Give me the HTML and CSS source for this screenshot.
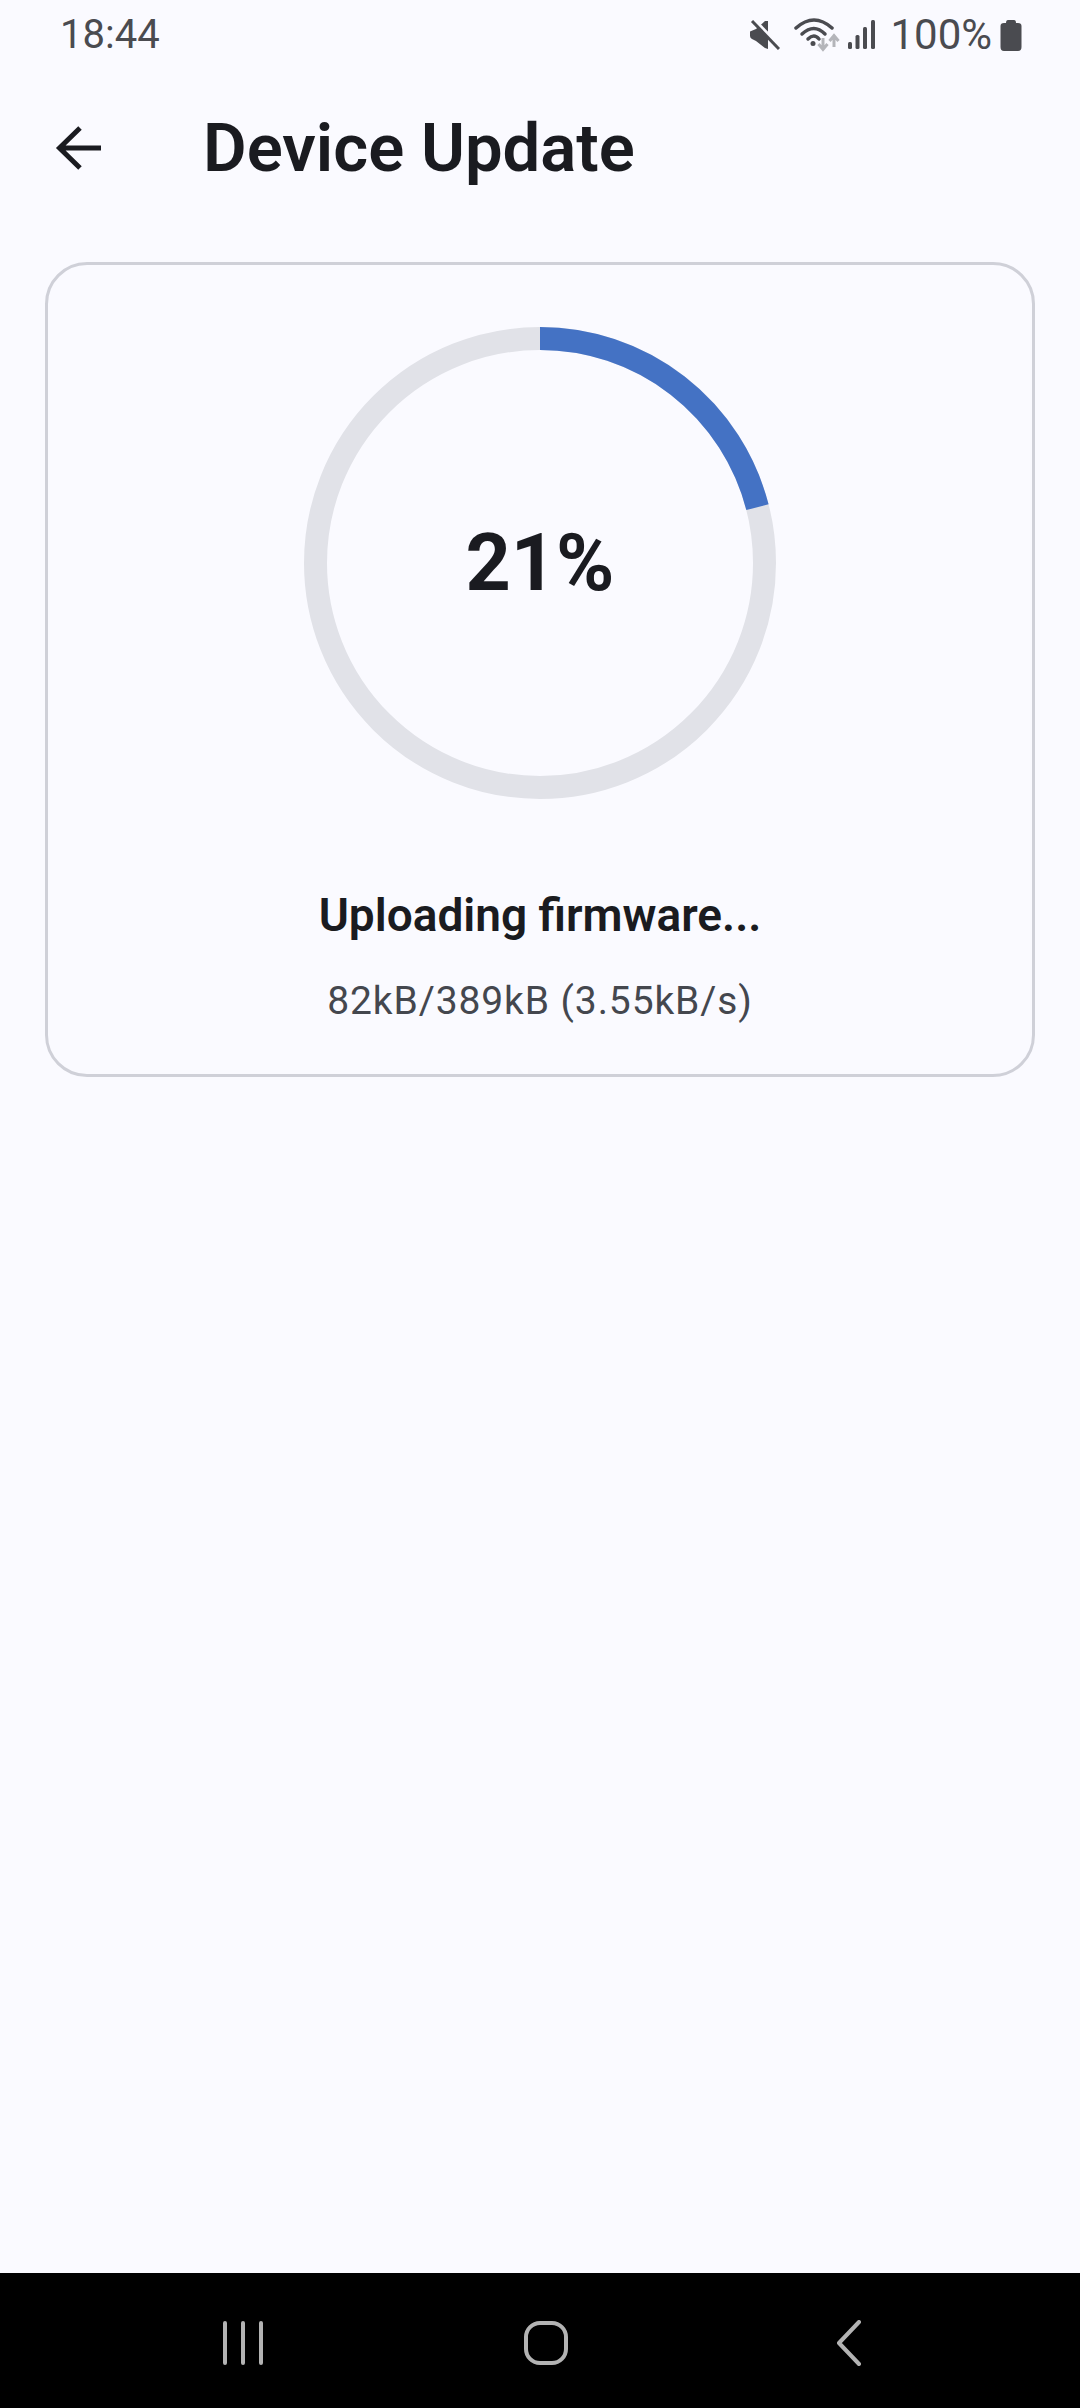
FILE: index.html
```html
<!DOCTYPE html>
<html lang="en">

<head>
    <meta charset="UTF-8">
    <meta name="viewport" content="width=device-width, initial-scale=1.0">
    <title>Device Update</title>
    <link rel="stylesheet" href="styles.css">
</head>

<body>
    <div class="statusbar">
        <span class="clock">18:44</span>
        <div class="status-icons">
            <svg class="icon-mute" width="30" height="30" viewBox="0 0 30 30">
                <path d="M0 11.500 L6 9 L15 1 L18 1 L18 29 L15 28 L6 21 L2 19 Q0 18 0 16Z" fill="#4a4b50"/>
                <path d="M3 -1 L30 27" stroke="#fafaff" stroke-width="4"/>
                <path d="M2 1 L29 29" stroke="#4a4b50" stroke-width="3"/>
            </svg>
            <svg class="icon-wifi" width="46" height="34" viewBox="0 0 46 34">
                <path d="M2 10 Q20 -6 38 10" fill="none" stroke="#4a4b50" stroke-width="3.500" stroke-linecap="round"/>
                <path d="M8 16 Q20 5 31 16" fill="none" stroke="#4a4b50" stroke-width="3.500" stroke-linecap="round"/>
                <path d="M14 21 Q20 15 25 21" fill="none" stroke="#4a4b50" stroke-width="3.500" stroke-linecap="round"/>
                <circle cx="19" cy="25.500" r="2.500" fill="#4a4b50"/>
                <path d="M29 20 V31 M24.500 26 L29 31.500 L33.500 26" fill="none" stroke="#b4b5ba" stroke-width="3"/>
                <path d="M40 29 V18 M35.500 23 L40 17.500 L44.500 23" fill="none" stroke="#b4b5ba" stroke-width="3"/>
            </svg>
            <svg class="icon-signal" width="28" height="30" viewBox="0 0 28 30">
                <rect x="0" y="22" width="4" height="7" rx="1.500" fill="#4a4b50"/>
                <rect x="7.500" y="15" width="4" height="14" rx="1.500" fill="#4a4b50"/>
                <rect x="15" y="7" width="4" height="22" rx="1.500" fill="#4a4b50"/>
                <rect x="23" y="0" width="4" height="29" rx="1.500" fill="#4a4b50"/>
            </svg>
            <span class="battery-text">100%</span>
            <svg class="icon-battery" width="22" height="31" viewBox="0 0 22 31">
                <path d="M6 3 Q6 0 8 0 H14 Q16 0 16 3 H18 Q21.500 3 21.500 6 V27 Q21.500 31 18 31 H4 Q0.500 31 0.500 27 V6 Q0.500 3 4 3Z" fill="#4a4b50"/>
            </svg>
        </div>
    </div>

    <header class="appbar">
        <svg class="back-arrow" width="48" height="48" viewBox="0 0 48 48">
            <path d="M46 24 H5 M25 4 L4.500 24 L25 44" fill="none" stroke="#1a1b20" stroke-width="5"/>
        </svg>
        <h1 class="page-title">Device Update</h1>
    </header>

    <main class="content">
        <section class="update-card">
            <div class="progress-ring">
                <svg width="472" height="472" viewBox="0 0 472 472">
                    <circle class="ring-track" cx="236" cy="236" r="224.500"/>
                    <circle class="ring-value" cx="236" cy="236" r="224.500" pathLength="100" stroke-dasharray="21 100" transform="rotate(-90 236 236)"/>
                </svg>
                <span class="percent">21%</span>
            </div>
            <div class="update-state">Uploading firmware...</div>
            <div class="update-detail">82kB/389kB (3.55kB/s)</div>
        </section>
    </main>

    <nav class="navbar">
        <svg width="42" height="44" viewBox="0 0 42 44" class="nav-recents">
            <path d="M2 2 V42 M20 2 V42 M38 2 V42" stroke="#b3b3b3" stroke-width="4" stroke-linecap="round"/>
        </svg>
        <svg width="46" height="46" viewBox="0 0 46 46" class="nav-home">
            <rect x="3" y="3" width="40" height="40" rx="14" fill="none" stroke="#b3b3b3" stroke-width="4"/>
        </svg>
        <svg width="26" height="46" viewBox="0 0 26 46" class="nav-back">
            <path d="M23 2 L3 23 L23 44" fill="none" stroke="#b3b3b3" stroke-width="4" stroke-linecap="round" stroke-linejoin="round"/>
        </svg>
    </nav>
</body>

</html>
```

FILE: styles.css
```css
* {
    box-sizing: border-box;
}

html,
body {
    margin: 0;
    padding: 0;
}

body {
    width: 1080px;
    height: 2408px;
    background-color: #fafaff;
    font-family: Roboto, sans-serif;
    color: #1a1b20;
    display: flex;
    flex-direction: column;
}

.statusbar {
    height: 70px;
    padding: 14px 58px 0 60px;
    display: flex;
    justify-content: space-between;
    align-items: flex-start;
    color: #4a4b50;
}

.clock {
    font-size: 40px;
    line-height: 42px;
}

.status-icons {
    display: flex;
    align-items: center;
    height: 42px;
}

.icon-wifi {
    margin-left: 14px;
}

.icon-signal {
    margin-left: 8px;
}

.battery-text {
    font-size: 42px;
    line-height: 42px;
    margin-left: 14px;
}

.icon-battery {
    margin-left: 8px;
}

.appbar {
    height: 156px;
    padding: 0 0 1px 55px;
    display: flex;
    align-items: center;
}

.back-arrow {
    flex: none;
}

.page-title {
    margin: 0 0 0 100px;
    font-size: 67px;
    line-height: 80px;
    font-weight: 600;
}

.content {
    flex: 1;
    padding: 36px 45px 0;
}

.update-card {
    height: 815px;
    border: 3px solid #cfd0d8;
    border-radius: 42px;
    padding-top: 62px;
    display: flex;
    flex-direction: column;
    align-items: center;
}

.progress-ring {
    width: 472px;
    height: 472px;
    display: grid;
    place-items: center;
}

.progress-ring svg,
.percent {
    grid-area: 1 / 1;
}

.ring-track,
.ring-value {
    fill: none;
    stroke-width: 23;
}

.ring-track {
    stroke: #e1e2e8;
}

.ring-value {
    stroke: #4472c4;
}

.percent {
    font-size: 79px;
    font-weight: 700;
    line-height: 96px;
}

.update-state {
    margin-top: 88px;
    font-size: 46px;
    line-height: 56px;
    font-weight: 600;
}

.update-detail {
    margin-top: 30px;
    font-size: 39px;
    line-height: 56px;
    letter-spacing: 0.9px;
    color: #44474e;
}

.navbar {
    height: 135px;
    background-color: #000;
    position: relative;
    flex: none;
}

.nav-recents,
.nav-home,
.nav-back {
    position: absolute;
}

.nav-recents {
    left: 223px;
    top: 48px;
}

.nav-home {
    left: 523px;
    top: 47px;
}

.nav-back {
    left: 836px;
    top: 47px;
}
```
